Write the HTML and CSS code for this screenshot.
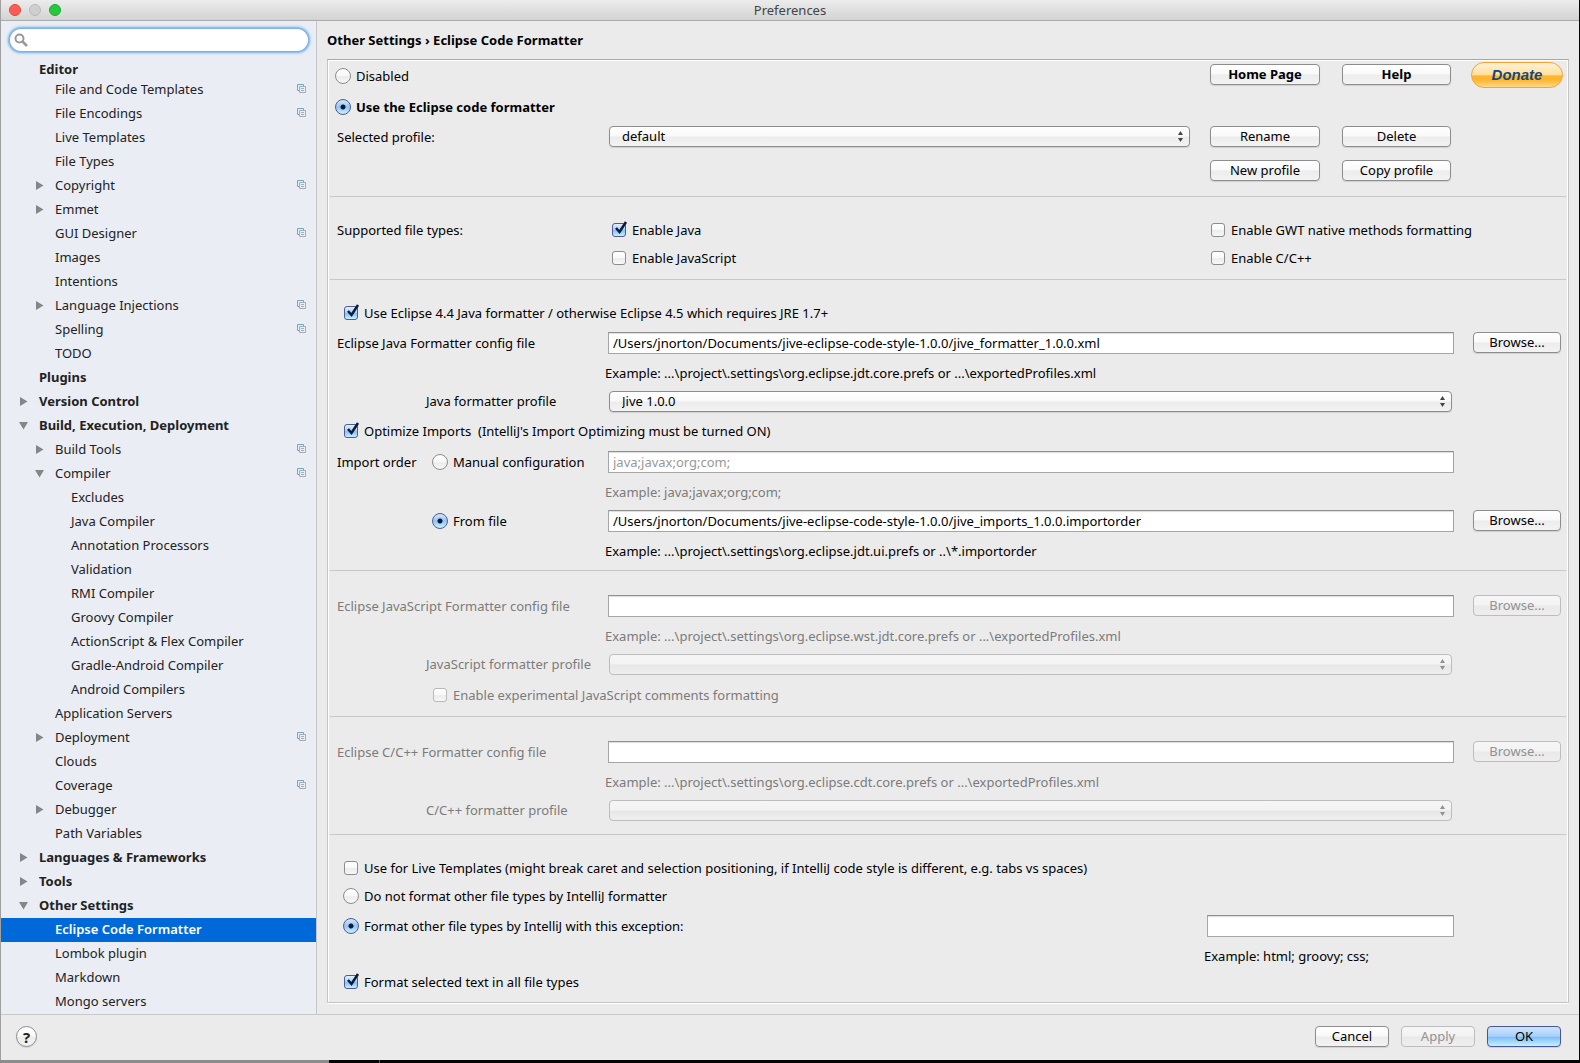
FILE: index.html
```html
<!DOCTYPE html>
<html lang="en">
<head>
<meta charset="utf-8">
<title>Preferences</title>
<link rel="stylesheet" href="styles.css">
</head>
<body>
<svg class="symbols" aria-hidden="true">
  <symbol id="copy" viewBox="0 0 10 10">
    <path d="M2.5 6.5H.5V.5H6.5V2" fill="none" stroke="#6fa8c4"/>
    <path d="M2.5 2.5H8.5V8.5H2.5Z" fill="none" stroke="#a9aeb4"/>
    <path d="M4 4.5H7M4 6.5H7" stroke="#a9aeb4"/>
  </symbol>
  <symbol id="closed" viewBox="0 0 9 9"><path d="M1 0L8.500 4.500L1 9Z" fill="#868686"/></symbol>
  <symbol id="open" viewBox="0 0 9 9"><path d="M0 1H9L4.500 8.500Z" fill="#868686"/></symbol>
</svg>
<div class="window">
  <header class="titlebar">
    <div class="lights"><i class="light close"></i><i class="light minimize"></i><i class="light maximize"></i></div>
    <h1>Preferences</h1>
  </header>
  <div class="columns">
    <nav class="sidebar">
      <div class="search">
        <svg viewBox="0 0 14 14" aria-hidden="true"><circle cx="5.500" cy="5.500" r="4" fill="none" stroke="#999" stroke-width="2"/><path d="M8.500 8.500L13 13" stroke="#999" stroke-width="2.500"/></svg>
        <input type="search" aria-label="Search settings">
      </div>
      <ul class="tree">
        <li class="group sticky"><a href="#">Editor</a></li>
        <li class="l1"><a href="#">File and Code Templates</a><svg class="copy"><use href="#copy"/></svg></li>
        <li class="l1"><a href="#">File Encodings</a><svg class="copy"><use href="#copy"/></svg></li>
        <li class="l1"><a href="#">Live Templates</a></li>
        <li class="l1"><a href="#">File Types</a></li>
        <li class="l1"><svg class="arrow"><use href="#closed"/></svg><a href="#">Copyright</a><svg class="copy"><use href="#copy"/></svg></li>
        <li class="l1"><svg class="arrow"><use href="#closed"/></svg><a href="#">Emmet</a></li>
        <li class="l1"><a href="#">GUI Designer</a><svg class="copy"><use href="#copy"/></svg></li>
        <li class="l1"><a href="#">Images</a></li>
        <li class="l1"><a href="#">Intentions</a></li>
        <li class="l1"><svg class="arrow"><use href="#closed"/></svg><a href="#">Language Injections</a><svg class="copy"><use href="#copy"/></svg></li>
        <li class="l1"><a href="#">Spelling</a><svg class="copy"><use href="#copy"/></svg></li>
        <li class="l1"><a href="#">TODO</a></li>
        <li class="group"><a href="#">Plugins</a></li>
        <li class="group"><svg class="arrow"><use href="#closed"/></svg><a href="#">Version Control</a></li>
        <li class="group"><svg class="arrow"><use href="#open"/></svg><a href="#">Build, Execution, Deployment</a></li>
        <li class="l1"><svg class="arrow"><use href="#closed"/></svg><a href="#">Build Tools</a><svg class="copy"><use href="#copy"/></svg></li>
        <li class="l1"><svg class="arrow"><use href="#open"/></svg><a href="#">Compiler</a><svg class="copy"><use href="#copy"/></svg></li>
        <li class="l2"><a href="#">Excludes</a></li>
        <li class="l2"><a href="#">Java Compiler</a></li>
        <li class="l2"><a href="#">Annotation Processors</a></li>
        <li class="l2"><a href="#">Validation</a></li>
        <li class="l2"><a href="#">RMI Compiler</a></li>
        <li class="l2"><a href="#">Groovy Compiler</a></li>
        <li class="l2"><a href="#">ActionScript &amp; Flex Compiler</a></li>
        <li class="l2"><a href="#">Gradle-Android Compiler</a></li>
        <li class="l2"><a href="#">Android Compilers</a></li>
        <li class="l1"><a href="#">Application Servers</a></li>
        <li class="l1"><svg class="arrow"><use href="#closed"/></svg><a href="#">Deployment</a><svg class="copy"><use href="#copy"/></svg></li>
        <li class="l1"><a href="#">Clouds</a></li>
        <li class="l1"><a href="#">Coverage</a><svg class="copy"><use href="#copy"/></svg></li>
        <li class="l1"><svg class="arrow"><use href="#closed"/></svg><a href="#">Debugger</a></li>
        <li class="l1"><a href="#">Path Variables</a></li>
        <li class="group"><svg class="arrow"><use href="#closed"/></svg><a href="#">Languages &amp; Frameworks</a></li>
        <li class="group"><svg class="arrow"><use href="#closed"/></svg><a href="#">Tools</a></li>
        <li class="group"><svg class="arrow"><use href="#open"/></svg><a href="#">Other Settings</a></li>
        <li class="l1 selected"><a href="#" aria-current="page">Eclipse Code Formatter</a></li>
        <li class="l1"><a href="#">Lombok plugin</a></li>
        <li class="l1"><a href="#">Markdown</a></li>
        <li class="l1"><a href="#">Mongo servers</a></li>
      </ul>
    </nav>
    <main>
      <h2>Other Settings › Eclipse Code Formatter</h2>
      <form class="panel">
        <section class="profiles">
          <div class="modes">
            <label class="option"><input type="radio" name="mode">Disabled</label>
            <label class="option strong"><input type="radio" name="mode" checked>Use the Eclipse code formatter</label>
          </div>
          <button type="button" class="strong">Home Page</button>
          <button type="button" class="strong">Help</button>
          <button type="button" class="donate">Donate</button>
          <label class="name" for="profile">Selected profile:</label>
          <select id="profile"><option>default</option></select>
          <button type="button">Rename</button>
          <button type="button">Delete</button>
          <button type="button" class="new">New profile</button>
          <button type="button">Copy profile</button>
        </section>

        <section class="types">
          <span class="name">Supported file types:</span>
          <label class="option"><input type="checkbox" checked>Enable Java</label>
          <label class="option"><input type="checkbox">Enable GWT native methods formatting</label>
          <label class="option second"><input type="checkbox">Enable JavaScript</label>
          <label class="option"><input type="checkbox">Enable C/C++</label>
        </section>

        <section class="fields java">
          <label class="option wide"><input type="checkbox" checked>Use Eclipse 4.4 Java formatter / otherwise Eclipse 4.5 which requires JRE 1.7+</label>
          <label class="name" for="java-file">Eclipse Java Formatter config file</label>
          <input type="text" id="java-file" value="/Users/jnorton/Documents/jive-eclipse-code-style-1.0.0/jive_formatter_1.0.0.xml">
          <button type="button">Browse...</button>
          <p class="example">Example: ...\project\.settings\org.eclipse.jdt.core.prefs or ...\exportedProfiles.xml</p>
          <label class="sub" for="java-profile">Java formatter profile</label>
          <select id="java-profile"><option>Jive 1.0.0</option></select>
          <label class="option wide"><input type="checkbox" checked><span class="pre">Optimize Imports  (IntelliJ's Import Optimizing must be turned ON)</span></label>
          <div class="order"><span class="name">Import order</span><label class="option"><input type="radio" name="order">Manual configuration</label></div>
          <input type="text" aria-label="Import order" placeholder="java;javax;org;com;">
          <p class="example dim">Example: java;javax;org;com;</p>
          <div class="order"><label class="option"><input type="radio" name="order" checked>From file</label></div>
          <input type="text" aria-label="Import order file" value="/Users/jnorton/Documents/jive-eclipse-code-style-1.0.0/jive_imports_1.0.0.importorder">
          <button type="button">Browse...</button>
          <p class="example">Example: ...\project\.settings\org.eclipse.jdt.ui.prefs or ..\*.importorder</p>
        </section>

        <section class="fields script dim">
          <label class="name" for="js-file">Eclipse JavaScript Formatter config file</label>
          <input type="text" id="js-file" disabled>
          <button type="button" disabled>Browse...</button>
          <p class="example">Example: ...\project\.settings\org.eclipse.wst.jdt.core.prefs or ...\exportedProfiles.xml</p>
          <label class="sub" for="js-profile">JavaScript formatter profile</label>
          <select id="js-profile" disabled></select>
          <div class="order wide"><label class="option"><input type="checkbox" disabled>Enable experimental JavaScript comments formatting</label></div>
        </section>

        <section class="fields cpp dim">
          <label class="name" for="cpp-file">Eclipse C/C++ Formatter config file</label>
          <input type="text" id="cpp-file" disabled>
          <button type="button" disabled>Browse...</button>
          <p class="example">Example: ...\project\.settings\org.eclipse.cdt.core.prefs or ...\exportedProfiles.xml</p>
          <label class="sub" for="cpp-profile">C/C++ formatter profile</label>
          <select id="cpp-profile" disabled></select>
        </section>

        <section class="others">
          <label class="option wide"><input type="checkbox">Use for Live Templates (might break caret and selection positioning, if IntelliJ code style is different, e.g. tabs vs spaces)</label>
          <label class="option wide"><input type="radio" name="other">Do not format other file types by IntelliJ formatter</label>
          <label class="option"><input type="radio" name="other" checked>Format other file types by IntelliJ with this exception:</label>
          <input type="text" aria-label="Excepted file types">
          <p class="example">Example: html; groovy; css;</p>
          <label class="option wide"><input type="checkbox" checked>Format selected text in all file types</label>
        </section>
      </form>
    </main>
  </div>
  <footer>
    <button type="button" class="help" aria-label="Help">?</button>
    <div class="actions">
      <button type="button">Cancel</button>
      <button type="button" disabled>Apply</button>
      <button type="button" class="default">OK</button>
    </div>
  </footer>
</div>
<div class="desktop"></div>
</body>
</html>
```
FILE: styles.css
```css
* { box-sizing: border-box; }

body {
  margin: 0;
  min-height: 100vh;
  display: flex;
  flex-direction: column;
  background: #050505;
  color: #000;
  font: 13px/20px "Lucida Grande", "Noto Sans", sans-serif;
}

h1, h2, p, ul { margin: 0; padding: 0; }
button, input, select { font: inherit; color: inherit; margin: 0; }
.symbols { position: absolute; width: 0; height: 0; }

.window {
  flex: 1;
  display: flex;
  flex-direction: column;
  margin-right: 1px;
  border-left: 1px solid #a0a0a0;
  background: #ebebeb;
}

/* Title bar */
.titlebar {
  display: grid;
  grid-template-columns: 1fr auto 1fr;
  align-items: center;
  height: 21px;
  border-bottom: 1px solid #ababab;
  border-radius: 4px 4px 0 0;
  background: linear-gradient(#ececec, #d3d3d3);
}
.titlebar h1 { font-size: 13px; font-weight: 400; color: #444; }
.lights { display: flex; gap: 8px; padding-left: 8px; }
.light { width: 12px; height: 12px; border-radius: 50%; border: 1px solid; }
.close { background: #ff5c54; border-color: #e2463f; }
.minimize { background: #cfcfcf; border-color: #b9b9b9; }
.maximize { background: #28c83e; border-color: #1dab2c; }

.columns { flex: 1; display: flex; }

/* Sidebar */
.sidebar {
  flex: none;
  width: 316px;
  border-right: 1px solid #c6c6c6;
  background: #eaedf3;
  color: #222;
}
.search {
  display: flex;
  align-items: center;
  gap: 4px;
  height: 22px;
  margin: 8px 8px 9px 9px;
  padding-left: 4px;
  border-radius: 11px;
  background: #fff;
  box-shadow: 0 0 0 1px #7fb3e4, 0 0 0 2px #8fbfea, 0 0 2px 3px #b5d4f1;
}
.search svg { width: 14px; height: 14px; }
.search input { flex: 1; min-width: 0; border: 0; outline: 0; background: none; }
.tree { list-style: none; }
.tree li { display: flex; align-items: center; height: 24px; padding: 0 9px 2px 0; }
.tree li.sticky { height: 18px; padding-bottom: 0; }
.tree a { flex: 1; color: inherit; text-decoration: none; white-space: nowrap; }
.tree li.group { padding-left: 38px; font-weight: 700; }
.tree li.l1 { padding-left: 54px; }
.tree li.l2 { padding-left: 70px; }
.arrow { width: 9px; height: 9px; margin: 0 11px 0 -20px; }
.copy { width: 10px; height: 10px; }
.tree .selected { background: #0069d9; color: #fff; font-weight: 600; }

/* Settings pane */
main { flex: 1; min-width: 0; padding: 9px 10px 11px; }
h2 { font-size: 13px; line-height: 20px; margin-bottom: 9px; }
.panel {
  border: 1px solid #c4c4c4;
  border-top-color: #a8a8a8;
  box-shadow: inset 1px 1px #fff, inset -1px 0 #fff, 0 1px #fff;
  padding: 0 2px;
}
section {
  display: grid;
  align-items: center;
  padding: 0 5px 0 7px;
  border-bottom: 1px solid #c8c8c8;
}
section:last-child { border-bottom: 0; }
.strong { font-weight: 700; }
.dim { color: #7b7b7b; }
.pre { white-space: pre; }
label, .name, .example { white-space: nowrap; }
.wide { grid-column: 1 / -1; }
.option { display: flex; align-items: center; gap: 6px; }

.profiles {
  grid-template-columns: 252px 1fr 112px 109px 92px;
  grid-template-rows: 62px 29px 39px;
  column-gap: 20px;
  padding-right: 3px;
  padding-bottom: 6px;
}
.modes {
  grid-column: 1 / 3;
  display: grid;
  grid-auto-rows: 31px;
  align-items: center;
  margin-left: -2px;
}
.modes .option { gap: 5px; }
.profiles button { max-width: 110px; }
.profiles .strong:not(label), .profiles .donate { align-self: start; margin-top: 4px; }
.profiles .donate { margin-top: 2px; }
.profiles .new { grid-column: 3; }

.types {
  grid-template-columns: 275px 1fr 350px;
  grid-auto-rows: 28px;
  padding-top: 19px;
  padding-bottom: 7px;
}
.types .second { grid-column: 2; }

.fields { grid-template-columns: 271px 1fr 88px; }
.fields > input { grid-column: 2; margin-right: 19px; }
.fields > button { margin-bottom: 2px; }
.fields > select { grid-column: 2; margin: 0 21px 0 1px; }
.fields .example { grid-column: 2 / -1; margin-left: -3px; }
.fields > .option { padding-left: 7px; }
.fields .sub { padding-left: 89px; }
.order { display: flex; }
.order .name { flex: 1; }
.order .option { width: 176px; gap: 5px; }
.order .option:only-child { margin-left: 95px; }
.order input[type="checkbox"] { margin: 0 1px; }
.java {
  grid-template-rows: 30px 30px 29px 28px 32px 30px 29px 30px 29px;
  padding-top: 18px;
  padding-bottom: 5px;
}
.script { grid-template-rows: 30px 29px 28px 34px; padding-top: 20px; padding-bottom: 4px; }
.cpp { grid-template-rows: 30px 29px 28px; padding-top: 20px; padding-bottom: 10px; }

.others {
  grid-template-columns: 1fr 247px;
  grid-template-rows: 30px 26px 33px 27px 26px;
  padding: 18px 112px 7px 13px;
}
.others .example { grid-column: 2; margin-left: -3px; }
.others .option { gap: 5px; }
.others input[type="checkbox"] { margin: 0 1px; }

/* Controls */
button {
  height: 21px;
  padding: 0 0 2px;
  border: 1px solid #8d8d8d;
  border-radius: 4px;
  background: linear-gradient(#fff 0%, #f9f9f9 48%, #ececec 52%, #f3f3f3 100%);
  box-shadow: 0 1px 1px #d0d0d0;
  line-height: 18px;
  text-align: center;
}
button:disabled {
  border-color: #bdbdbd;
  background: linear-gradient(#f6f6f6 0%, #f3f3f3 48%, #e9e9e9 52%, #eee 100%);
  box-shadow: none;
  color: #929292;
}
.donate {
  height: 26px;
  padding: 0;
  border: 1px solid #f9a23a;
  border-radius: 13px;
  background: linear-gradient(#fff2d6 0%, #ffe0a0 48%, #ffb52e 54%, #ffb52e 70%, #ffd98c 100%);
  box-shadow: none;
  color: #15497a;
  font: italic 700 15px/20px "Liberation Sans", Arial, sans-serif;
}
select {
  appearance: none;
  height: 21px;
  padding: 0 24px 2px 12px;
  border: 1px solid #8d8d8d;
  border-radius: 4px;
  background:
    url("data:image/svg+xml,%3Csvg xmlns='http://www.w3.org/2000/svg' width='5' height='11'%3E%3Cpath d='M2.5 0L5 4H0ZM2.5 11L0 7H5Z' fill='%23444'/%3E%3C/svg%3E") right 6px center no-repeat,
    linear-gradient(#fff 0%, #f9f9f9 48%, #ececec 52%, #f3f3f3 100%);
  box-shadow: 0 1px 1px #d0d0d0;
  line-height: 18px;
}
select:disabled {
  opacity: 1;
  border-color: #bdbdbd;
  background:
    url("data:image/svg+xml,%3Csvg xmlns='http://www.w3.org/2000/svg' width='5' height='11'%3E%3Cpath d='M2.5 0L5 4H0ZM2.5 11L0 7H5Z' fill='%23909090'/%3E%3C/svg%3E") right 6px center no-repeat,
    linear-gradient(#f6f6f6 0%, #f3f3f3 48%, #e7e7e7 52%, #eee 100%);
  box-shadow: none;
}
input[type="text"] {
  width: auto;
  min-width: 0;
  height: 22px;
  padding: 0 4px;
  border: 1px solid #a6a6a6;
  border-top-color: #8f8f8f;
  border-radius: 0;
  background: #fff;
  box-shadow: inset 0 1px 1px #ddd;
}
input::placeholder { color: #999; opacity: 1; }
input[type="radio"], input[type="checkbox"] {
  appearance: none;
  flex: none;
  position: relative;
  width: 14px;
  height: 14px;
  border: 1px solid #8d8d8d;
  border-radius: 3px;
  background: linear-gradient(#fff 0%, #f8f8f8 48%, #ececec 55%, #f8f8f8 100%);
}
input[type="radio"] { width: 16px; height: 16px; border-radius: 50%; }
input[type="radio"]:checked, input[type="checkbox"]:checked {
  border-color: #4c5c94;
  background: linear-gradient(#e3effc 0%, #a9d0f8 48%, #86c0f7 55%, #c9f0ff 100%);
}
input[type="radio"]:checked {
  background:
    radial-gradient(circle, #0a1a36 0 2px, transparent 3px),
    linear-gradient(#d5e7fb 0%, #94c4f5 50%, #c9f0ff 100%);
}
/* The tick reaches past the top right corner of its box */
input[type="checkbox"]:checked::after {
  content: "";
  position: absolute;
  left: 1px;
  top: -3px;
  width: 14px;
  height: 14px;
  background: url("data:image/svg+xml,%3Csvg xmlns='http://www.w3.org/2000/svg' width='14' height='14'%3E%3Cpath d='M2 7L5.500 11L12 1' fill='none' stroke='%230b1c38' stroke-width='2.500'/%3E%3C/svg%3E");
}
input[type="checkbox"]:disabled { border-color: #b8b8b8; }

/* Footer */
footer {
  display: flex;
  align-items: center;
  justify-content: space-between;
  height: 46px;
  padding: 0 18px 2px 15px;
  border-top: 1px solid #c8c8c8;
}
.help { width: 21px; height: 21px; padding: 0; border-radius: 50%; font-size: 15px; font-weight: 700; color: #222; }
.actions { display: flex; gap: 12px; }
.actions button { width: 74px; }
.actions .default {
  border-color: #4a5596;
  background: linear-gradient(#cfe4fb 0%, #a8d1fa 48%, #80bffa 55%, #c4f2ff 100%);
}

/* Strip of the desktop that shows below the window */
.desktop {
  height: 3px;
  background: linear-gradient(90deg, #8c8c8c 329px, #050505 329px, #050505 379px, #555 379px, #555 380px, #050505 380px);
}
```
